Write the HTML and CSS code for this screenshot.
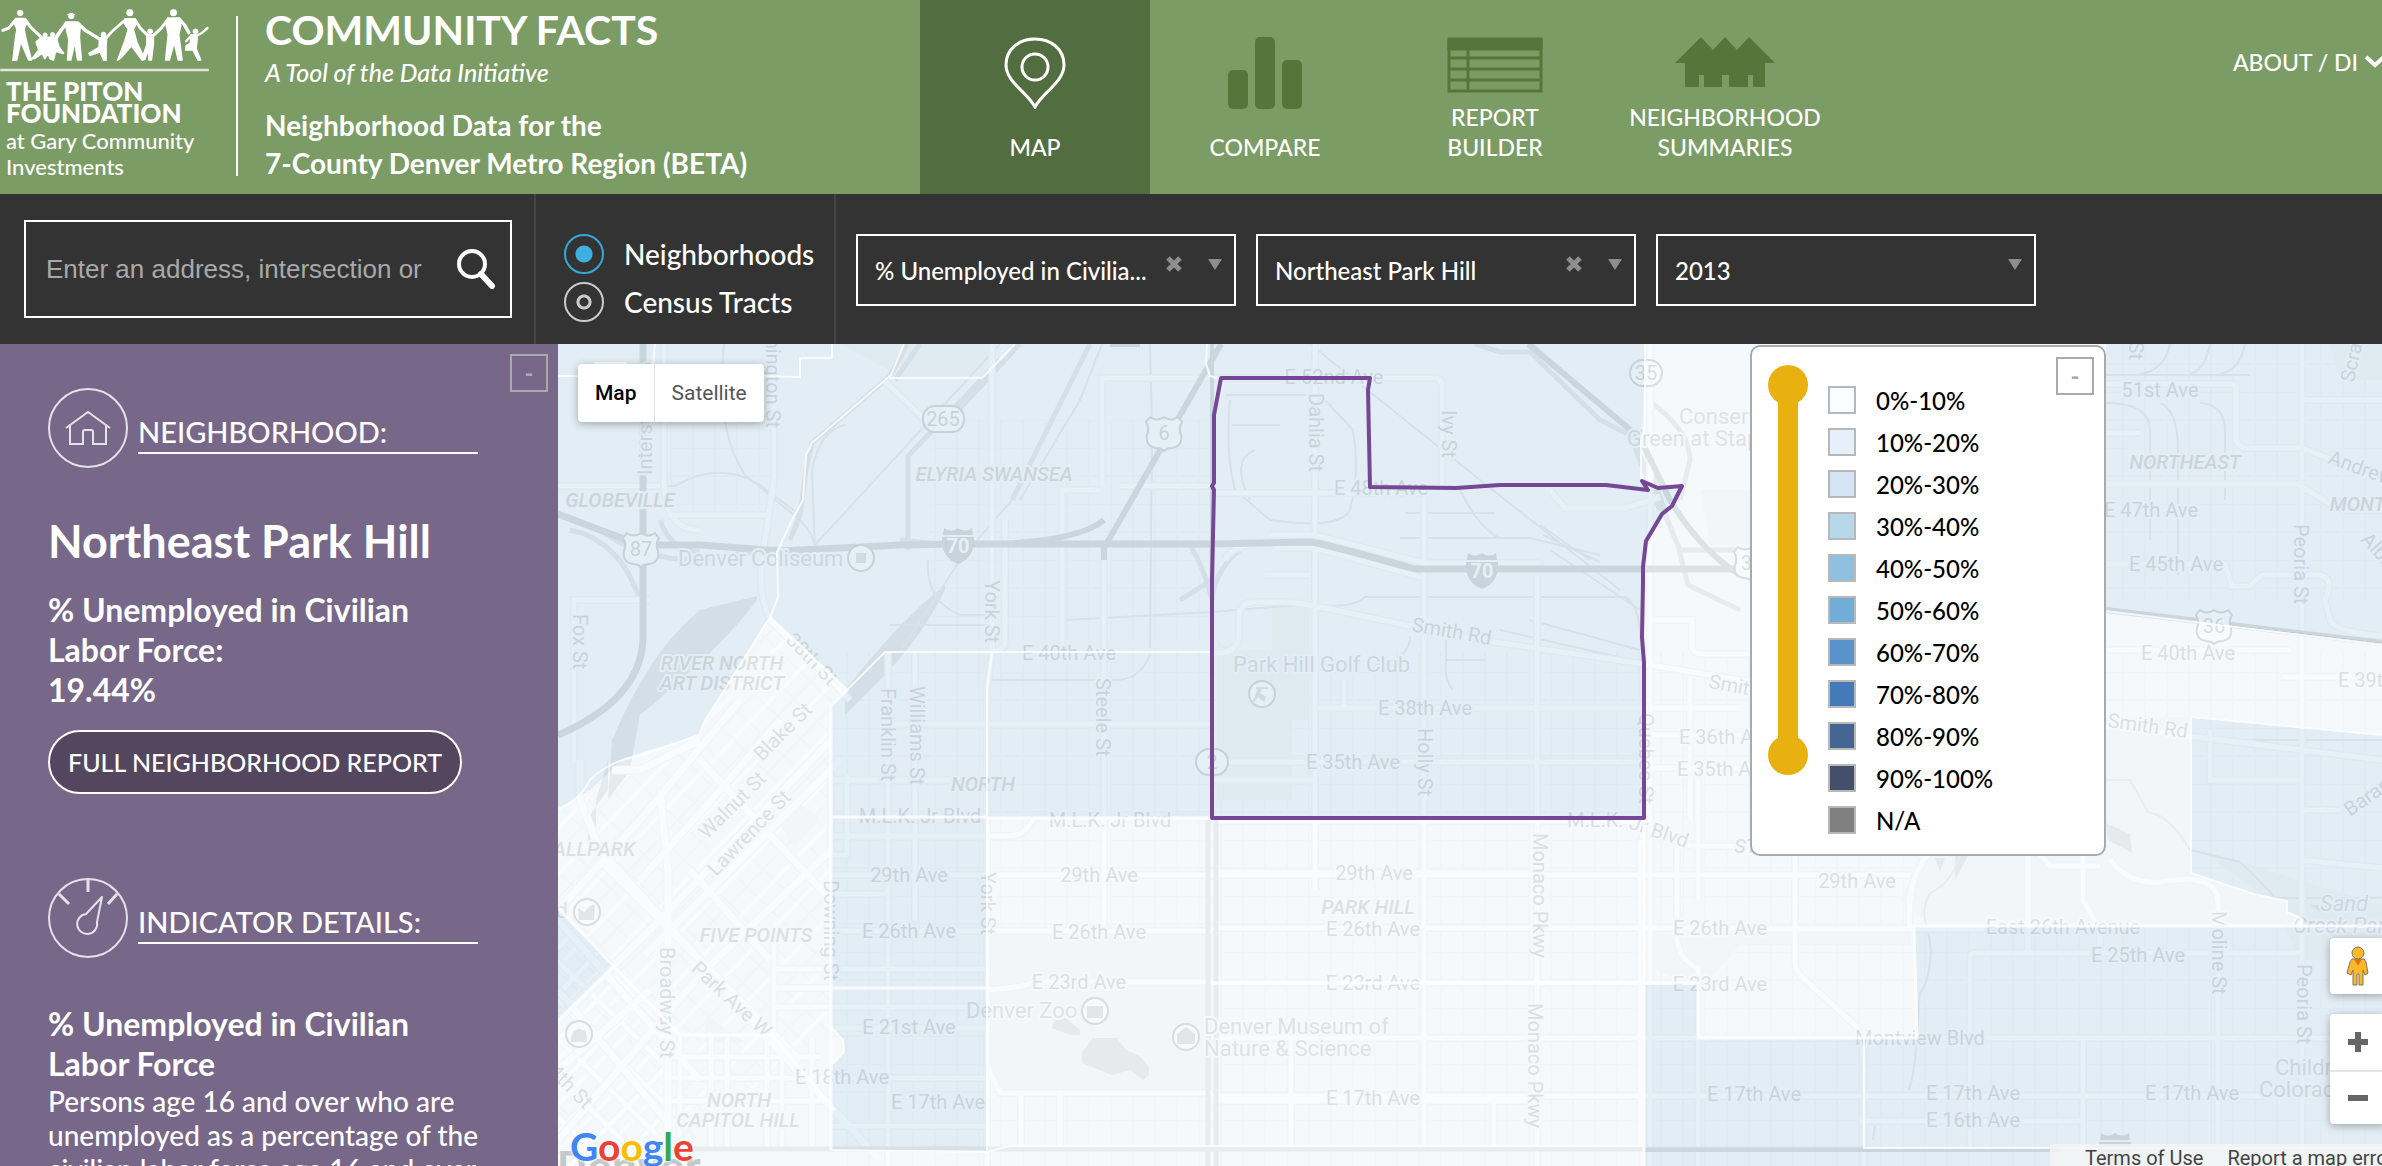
FILE: index.html
```html
<!DOCTYPE html>
<html lang="en">
<head>
<meta charset="utf-8">
<title>Community Facts</title>
<link rel="stylesheet" href="styles.css">
</head>
<body>
<header class="header">
  <div class="brand">
    <a class="logo" href="#">
      <svg class="people" viewBox="0 0 626 216" aria-hidden="true">
        <g fill="#fff" stroke="#fff" stroke-linecap="round" stroke-linejoin="round">
          <circle cx="60" cy="39" r="9"/>
          <path stroke-width="4" d="M46 55L75 55L80 68L72 88L78 118L94 180L85 180L62 125L50 180L38 181L46 112L50 88L42 70Z"/>
          <path fill="none" stroke-width="9" d="M46 60L26 84L8 91M76 60L92 82L124 112"/>
          <circle cx="135" cy="105" r="7"/><circle cx="157" cy="104" r="7"/>
          <path stroke-width="5" d="M124 112L168 112L176 140L190 160L166 154L160 180L150 176L144 160L134 176L126 160L104 175L96 176L116 150L108 126Z"/>
          <path fill="none" stroke-width="8" d="M166 112L188 82"/>
          <circle cx="213" cy="48" r="9"/><path stroke-width="4" d="M203 43L223 43"/>
          <path stroke-width="4" d="M196 66L232 66L240 84L238 112L244 180L232 180L224 128L212 180L202 180L206 118L198 88Z"/>
          <path fill="none" stroke-width="10" d="M198 70L182 92L166 118M234 70L254 90L296 116"/>
          <circle cx="310" cy="104" r="8"/>
          <path stroke-width="4" d="M298 114L320 112L318 140L318 181L310 181L300 156L270 166L266 160L296 142Z"/>
          <path fill="none" stroke-width="8" d="M318 114L338 92L372 62"/>
          <circle cx="389" cy="38" r="10"/>
          <path stroke-width="4" d="M374 56L405 56L408 72L400 88L410 126L434 178L426 181L394 138L362 174L352 181L374 122L384 88L372 70Z"/>
          <path fill="none" stroke-width="9" d="M405 60L420 84L440 104"/>
          <circle cx="450" cy="94" r="8"/>
          <path stroke-width="4" d="M440 104L460 104L460 132L454 180L446 180L444 150L434 178L426 174L440 134Z"/>
          <path fill="none" stroke-width="9" d="M460 106L482 86L502 60"/>
          <circle cx="520" cy="38" r="10"/>
          <path stroke-width="4" d="M502 54L538 54L542 76L536 104L546 180L534 180L522 128L508 180L496 180L504 104L498 76Z"/>
          <path fill="none" stroke-width="10" d="M538 58L554 76L566 98"/>
          <circle cx="586" cy="94" r="8"/>
          <path stroke-width="4" d="M572 104L592 104L590 130L588 146L602 180L594 181L578 150L556 150L558 136L570 130Z"/>
          <path fill="none" stroke-width="7" d="M592 106L606 98L622 84M572 108L558 124"/>
        </g>
        <path d="M0 210H626" stroke="#dfe8d8" stroke-width="7"/>
      </svg>
      <span class="logo-name">THE PITON<br>FOUNDATION</span>
      <span class="logo-sub">at Gary Community<br>Investments</span>
    </a>
    <div class="titles">
      <h1>COMMUNITY FACTS</h1>
      <p class="tagline">A Tool of the Data Initiative</p>
      <p class="region">Neighborhood Data for the<br>7-County Denver Metro Region (BETA)</p>
    </div>
  </div>
  <nav class="nav">
    <a class="nav-item active" href="#">
      <svg width="62" height="72" viewBox="0 0 62 72" fill="none" stroke="#fff" stroke-width="3"><path d="M31 70C24 56 2 45 2 28C2 12 15 2 31 2S60 12 60 28C60 45 38 56 31 70Z"/><circle cx="31" cy="30" r="13"/></svg>
      <span>MAP</span>
    </a>
    <a class="nav-item" href="#">
      <svg width="74" height="72" viewBox="0 0 74 72" fill="#54763b"><rect y="33" width="20" height="39" rx="5"/><rect x="27" width="20" height="72" rx="5"/><rect x="54" y="23" width="20" height="49" rx="5"/></svg>
      <span>COMPARE</span>
    </a>
    <a class="nav-item" href="#">
      <svg width="96" height="56" viewBox="0 0 96 56" fill="none" stroke="#54763b" stroke-width="3"><path fill="#54763b" d="M2 2H94V12H2Z"/><path d="M2 2V54H94V2M2 21H94M2 32H94M2 43H94M21 12V54"/></svg>
      <span>REPORT<br>BUILDER</span>
    </a>
    <a class="nav-item" href="#">
      <svg width="100" height="50" viewBox="0 0 100 50" fill="#54763b"><path d="M0 26L26 0L38 13L50 0L62 13L74 0L100 26H90V50H78V38H73V50H54V38H47V50H29V38H24V50H10V26Z"/></svg>
      <span>NEIGHBORHOOD<br>SUMMARIES</span>
    </a>
  </nav>
  <a class="about" href="#">ABOUT / DI
    <svg width="22" height="14" viewBox="0 0 22 14" fill="none" stroke="#fff" stroke-width="4"><path d="M2 2L11 10L20 2"/></svg>
  </a>
</header>

<form class="toolbar">
  <div class="search-cell">
    <div class="search">
      <input type="text" aria-label="Address search" placeholder="Enter an address, intersection or">
      <button type="button" aria-label="Search">
        <svg width="40" height="40" viewBox="0 0 40 40" fill="none" stroke="#fff" stroke-linecap="round"><circle cx="16" cy="15" r="13" stroke-width="4"/><path d="M25 25L36 37" stroke-width="6"/></svg>
      </button>
    </div>
  </div>
  <div class="levels">
    <label><input type="radio" name="level" checked>Neighborhoods</label>
    <label><input type="radio" name="level">Census Tracts</label>
  </div>
  <div class="filters">
    <div class="filter">
      <select aria-label="Indicator"><option>% Unemployed in Civilia...</option></select>
      <button class="clear" type="button" aria-label="Clear indicator"><svg width="16" height="16" viewBox="0 0 16 16" stroke="#8d8d8d" stroke-width="5"><path d="M2 2L14 14M14 2L2 14"/></svg></button>
      <span class="arrow"></span>
    </div>
    <div class="filter">
      <select aria-label="Neighborhood"><option>Northeast Park Hill</option></select>
      <button class="clear" type="button" aria-label="Clear neighborhood"><svg width="16" height="16" viewBox="0 0 16 16" stroke="#8d8d8d" stroke-width="5"><path d="M2 2L14 14M14 2L2 14"/></svg></button>
      <span class="arrow"></span>
    </div>
    <div class="filter">
      <select aria-label="Year"><option>2013</option></select>
      <span class="arrow"></span>
    </div>
  </div>
</form>

<main class="main">
  <aside class="sidebar">
    <button class="collapse" type="button">-</button>
    <section class="block">
      <div class="block-head">
        <svg width="80" height="80" viewBox="0 0 80 80" fill="none" stroke="#e6e2ea" stroke-width="2"><circle cx="40" cy="40" r="39"/><path d="M18 40L40 24L62 40M22 38V56H35V44Q35 42 37 42H43Q45 42 45 44V56H58V38"/></svg>
        <h2>NEIGHBORHOOD:</h2>
      </div>
      <h3 class="place">Northeast Park Hill</h3>
      <p class="stat">% Unemployed in Civilian<br>Labor Force:<br>19.44%</p>
      <button class="report" type="button">FULL NEIGHBORHOOD REPORT</button>
    </section>
    <section class="block">
      <div class="block-head">
        <svg width="80" height="80" viewBox="0 0 80 80" fill="none" stroke="#e6e2ea" stroke-width="2"><circle cx="40" cy="40" r="39"/><path stroke-width="3" d="M40 1V14M11 16L21 26M69 16L60 26"/><path d="M54 19L49 44A10 10 0 1 1 38 36Z" stroke-linejoin="round"/></svg>
        <h2>INDICATOR DETAILS:</h2>
      </div>
      <p class="stat detail">% Unemployed in Civilian<br>Labor Force</p>
      <p class="about-text">Persons age 16 and over who are<br>unemployed as a percentage of the<br>civilian labor force age 16 and over</p>
    </section>
  </aside>

  <section class="map" aria-label="Map">
    <svg class="map-canvas" viewBox="558 344 1824 822" preserveAspectRatio="xMinYMin slice">
      <defs>
        <pattern id="blocks" width="88" height="56" patternUnits="userSpaceOnUse"><path d="M0 28H88M0 0H88M11 0V56M33 0V56M55 0V56M77 0V56" stroke="#dfe3e7" stroke-width="2" fill="none"/></pattern>
        <pattern id="diag" width="24" height="32" patternUnits="userSpaceOnUse" patternTransform="rotate(-46)"><path d="M0 1H24M1 0V32" stroke="#dfe3e7" stroke-width="2" fill="none"/><path d="M0 17H24" stroke="#f8fafb" stroke-width="3"/></pattern>
        <pattern id="diag2" width="28" height="32" patternUnits="userSpaceOnUse" patternTransform="rotate(-46)"><path d="M0 4H28M4 0V32" stroke="#d8dce0" stroke-width="7" fill="none"/><path d="M0 4H28M4 0V32" stroke="#fcfdfe" stroke-width="5"/></pattern>
        <g id="us"><path d="M-14-16Q-7-11 0-16Q7-11 14-16L18-11Q14-5 17 2Q19 13 8 15Q3 15 0 18Q-3 15-8 15Q-19 13-17 2Q-14-5-18-11Z" fill="#f4f5f6" stroke="#75797d" stroke-width="2"/></g>
        <g id="inter" fill="#7d8287"><path d="M-14-18Q-7-13 0-18Q7-13 14-18L15-11H-15Z"/><path d="M-16-9H16Q17 12 0 18Q-17 12-16-9Z"/></g>
        <path id="roads" d="M558 486H660M574 762V600H650M664 344V480Q664 530 700 530M668 515H770M774 344V480L762 560Q758 600 772 622L850 700M884 380L925 420M1102 486V378H1212M1062 640V490H1100M992 344V652L987 690V1166M1005 520V640Q1005 652 990 652M1104 540V930M1062 492V652M1120 486H1212M1212 493H1424M1265 575H1310M888 652V1166M915 652V920M885 724H1212M831 780H987M831 836H1010Q1025 836 1034 818H1212M831 875H1740M831 931H1212M831 774V855H847V775M774 969H987M774 1007H987M774 988H831M774 930V1040M831 894H888V875M987 990Q1020 988 1035 982H1212M831 1028H987M670 1057H820M670 1078H987M670 1101H831M831 1126H987M680 1037V1150M711 1037V1150M727 1037V1150M767 1037V1150M782 1037V1150M812 1037V1150M987 1066L1000 1093H1212M1104 800V875M1021 1093V1150M1060 1093V1150M1315 344V818H1315V890M1100 378H1435Q1442 378 1442 386V487M1315 542H1270Q1230 545 1225 560M1275 548H1315L1424 578M1270 535H1315L1424 563H1540M1424 497V1148M1537 575V1166M1550 490L1565 508H1625L1660 497M1212 653H1222Q1238 650 1239 635V615Q1241 602 1254 602H1290L1315 606L1410 626L1480 640L1644 664L1740 680L2107 726L2382 760M1315 708H1344V680M1315 708H1740M1212 762H1644M1212 780H1315M1650 344V1166M1212 821H1620Q1660 822 1690 846H1760M1644 768H1740M1644 735H1740M1652 620H1692V640Q1690 655 1702 654H1750M1690 678V820M1646 842H1640V1148M1677 842V940Q1680 960 1698 968V1166M1698 780V900M1212 872L1315 873H1530M1212 928H1740M1212 983H1644M1212 1038H2382M1291 1038V1148M1212 1096H2330M1212 1101H1537M1494 1096V1148M1795 850V960Q1795 972 1805 980L1855 1025Q1862 1034 1864 1060V1166M1670 875H1910M1910 930Q1905 880 1930 852M1740 929H1990M1970 1148V960Q1970 953 1976 953H2302M2028 850V953M2083 850V900L2100 930V953M2100 866H2050L2036 850M2110 860Q2130 885 2160 882Q2215 872 2218 900V1148M2083 1038V1160M1860 1121H2083M2302 344V1166M2106 484H2298L2340 510H2382M2236 384H2106M2236 384V440Q2240 450 2250 448H2302L2382 480M2302 400H2382M2106 564H2225L2232 586H2250L2262 575H2320Q2335 578 2325 600L2330 620Q2335 632 2382 636M2106 650H2290M2282 677H2382M2210 730V780H2302M2302 810H2340M2302 860L2382 868M2106 433H2140"/>
        <path id="diagroads" d="M558 910L640 820L740 700M580 760V800L600 850L700 960L760 1030L880 1160M612 770H640L700 740M660 790L668 870V1166M600 860L800 1060M558 920L700 1080M558 990L666 1120M645 955L840 760M640 880L720 790L780 720M700 760L831 900M690 870L770 960M558 1020L660 920L831 740M558 1140L700 975L831 850M558 1070L650 990"/>
      </defs>
      <rect x="558" y="344" width="1824" height="822" fill="#ebeff3"/>
      <rect x="831" y="652" width="1551" height="514" fill="url(#blocks)"/>
      <path d="M664 378H770V520H664ZM930 420H1210V640H930ZM2106 344H2382V600H2106Z" fill="url(#blocks)"/>
      <path d="M770 617L847 690L831 706V1030L670 1160H558V809L699 735Z" fill="url(#diag)"/>
      <path d="M558 910L666 1030V1166H558Z" fill="url(#diag2)"/>
      <g fill="#dde0e2">
        <path d="M987 933H1212V1092H1000L987 1066ZM1217 640L1230 650H1272V606H1310V720H1292V800H1217ZM1646 930H1740L1910 932V945H1740L1700 990L1646 965ZM2106 717H2191V873L2280 900L2290 925H1930L1900 900L1925 856H1970L2106 850ZM1700 490H1750V545H1710ZM840 344H990V376H900ZM2200 850L2382 905V960H2302L2270 900ZM2330 344H2382V380H2340ZM706 1015L745 1042H705ZM780 825L800 805L820 818L795 848Z"/>
      </g>
      <g fill="#acb1b5">
        <path d="M757 596L700 610Q650 650 612 740L608 800L630 770L640 715Q720 650 757 600ZM945 585Q900 620 845 690L845 715L880 680Q920 640 945 590ZM590 815L608 790V760L596 800V845H587ZM2106 823L2130 834L2132 853L2108 840ZM1935 858H1945L1940 872ZM1955 856H1968L1955 880ZM2310 905H2330L2320 912ZM1082 1052L1093 1038H1117L1126 1050L1140 1056L1149 1068V1075L1143 1080L1130 1070L1112 1075L1082 1063ZM1052 1028L1055 1018H1066L1080 1030V1035H1070Z"/>
      </g>
      <g fill="none" stroke="#b6bbbf" stroke-width="2">
        <path d="M724 344Q715 430 745 475L800 520Q815 535 815 550M560 486H675Q720 460 760 485L800 515M815 545L1000 344M815 550L812 470Q820 430 845 425M1066 620L1212 612L1310 604Q1350 610 1365 597H1625Q1640 605 1640 640M1310 344L1480 480L1620 590M1225 395H1310M1230 400Q1225 450 1235 490L1270 520Q1340 530 1350 510Q1360 470 1353 430L1325 400M1405 513H1495M1460 490Q1480 530 1500 538H1530L1600 555M1400 538H1530M1250 500Q1230 460 1255 450M1232 425H1280M1375 665Q1410 660 1410 636M1446 640V660H1485M1446 660Q1444 680 1453 690M928 560Q925 600 960 615H985M890 625H990M992 680H1110Q1140 682 1150 655M1150 344L1152 430Q1151 520 1150 648M1530 620L1640 650M1500 630L1640 662M1540 525L1590 560M1543 535L1600 562M1550 550L1640 610M2106 375H2250M2106 403Q2150 403 2150 430V540M2160 403Q2178 410 2178 450V575M2200 403Q2225 405 2225 430V500M2170 344Q2165 370 2140 374M2210 344Q2205 370 2190 374M2245 344Q2240 370 2220 374M1970 780H2130L2148 812Q2170 815 2190 850L2240 862Q2260 880 2275 898H2382M1960 856Q1950 885 1930 893Q1920 910 1928 930L1931 950Q1930 980 1920 993L1915 1060Q1912 1085 1908 1090M1875 1125L1873 1140M2230 740H2382M900 652L960 560L1012 500M1020 500L1080 400L1102 344"/>
      </g>
      <g fill="none" stroke="#aeb3b7" stroke-width="5">
        <path d="M907 344L890 376L812 443L806 470L800 515L790 540M1000 360L908 456V550M940 430L1020 344M1090 344L1012 500M920 344L895 380M1640 430Q1665 520 1678 545L1688 585L1740 610M1648 400Q1690 430 1690 460L1680 500M1530 344L1630 430L1646 470L1680 550H1740M1475 344L1500 352H1530L1600 420L1630 435L1660 510M900 540L950 545M600 530Q640 560 700 560L780 548M640 600Q620 540 570 530M660 520Q670 550 700 552M1180 600L1212 580V540M1190 545Q1205 570 1212 600Q1215 570 1240 550"/>
      </g>
      <use href="#roads" fill="none" stroke="#d9dde1" stroke-width="8"/>
      <use href="#diagroads" fill="none" stroke="#d9dde1" stroke-width="9"/>
      <use href="#roads" fill="none" stroke="#f8fafb" stroke-width="5"/>
      <use href="#diagroads" fill="none" stroke="#fafbfc" stroke-width="7"/>
      <g fill="none" stroke="#888d91">
        <path stroke-width="7" d="M558 514L640 545H700L780 551L900 545L960 544H1211L1312 542Q1340 548 1415 569H1740M643 344V640Q640 700 558 735"/>
        <path stroke-width="6" d="M1221 344L1104 548V560M1000 544Q1080 540 1104 520M1528 344L1640 438L1670 500Q1700 550 1740 575M2106 610L2382 643M1140 344L1110 344"/>
        <path stroke="#b4b6b8" stroke-width="5" d="M645 1149H1864M1208 820V1166M1216 820V1166"/>
        <path stroke-width="4" d="M1644 1150H2060M1212 344V660"/>
      </g>

      <g class="lbl">
        <g text-anchor="middle">
          <text x="1069" y="660">E 40th Ave</text><text x="920" y="823">M.L.K. Jr Blvd</text><text x="1110" y="827">M.L.K. Jr Blvd</text>
          <text x="909" y="882">29th Ave</text><text x="1099" y="882">29th Ave</text><text x="1374" y="880">29th Ave</text><text x="1857" y="888">29th Ave</text>
          <text x="909" y="938">E 26th Ave</text><text x="1099" y="939">E 26th Ave</text><text x="1373" y="936">E 26th Ave</text><text x="1720" y="935">E 26th Ave</text>
          <text x="1079" y="989">E 23rd Ave</text><text x="1373" y="990">E 23rd Ave</text><text x="1720" y="991">E 23rd Ave</text>
          <text x="909" y="1034">E 21st Ave</text><text x="842" y="1084">E 18th Ave</text><text x="938" y="1109">E 17th Ave</text><text x="1373" y="1105">E 17th Ave</text>
          <text x="1754" y="1101">E 17th Ave</text><text x="1973" y="1100">E 17th Ave</text><text x="2192" y="1100">E 17th Ave</text><text x="1973" y="1127">E 16th Ave</text>
          <text x="1334" y="384">E 52nd Ave</text><text x="1381" y="495">E 48th Ave</text><text x="1425" y="715">E 38th Ave</text><text x="1353" y="769">E 35th Ave</text>
          <text x="2063" y="934">East 26th Avenue</text><text x="2138" y="962">E 25th Ave</text><text x="1920" y="1045">Montview Blvd</text>
          <text x="2160" y="397">51st Ave</text><text x="2151" y="517">E 47th Ave</text><text x="2176" y="571">E 45th Ave</text><text x="2188" y="660">E 40th Ave</text>
        </g>
        <text x="1567" y="827">M.L.K.</text><text transform="translate(1628 828) rotate(19)">Jr Blvd</text>
        <text x="1679" y="744">E 36th Ave</text><text x="1677" y="776">E 35th Ave</text><text x="2338" y="687">E 39th Ave</text>
        <text transform="translate(1411 631) rotate(10)">Smith Rd</text><text transform="translate(1708 688) rotate(10)">Smith Rd</text><text transform="translate(2107 727) rotate(8)">Smith Rd</text>
        <text transform="translate(2327 463) rotate(20)">Andrews Dr</text><text transform="translate(2360 540) rotate(48)">Albrook Dr</text><text transform="translate(2350 817) rotate(-35)">Baranmor</text><text transform="translate(2354 383) rotate(-78)">Scranton</text>
        <text transform="translate(707 840) rotate(-45)">Walnut St</text><text transform="translate(716 877) rotate(-46)">Lawrence St</text><text transform="translate(762 762) rotate(-45)">Blake St</text>
        <text transform="translate(785 641) rotate(46)">38th St</text><text transform="translate(690 970) rotate(43)">Park Ave W</text><text transform="translate(584 1110) rotate(46)" text-anchor="end">14th St</text>
        <g>
          <text transform="translate(824 880) rotate(90)">Downing St</text><text transform="translate(981 872) rotate(90)">York St</text><text transform="translate(660 947) rotate(90)">Broadway St</text>
          <text transform="translate(881 688) rotate(90)">Franklin St</text><text transform="translate(910 686) rotate(90)">Williams St</text><text transform="translate(1096 678) rotate(90)">Steele St</text>
          <text transform="translate(985 580) rotate(90)">York St</text><text transform="translate(573 614) rotate(90)">Fox St</text><text transform="translate(766 428) rotate(90)" text-anchor="end">Washington St</text>
          <text transform="translate(652 475) rotate(-90)">Interstate 25</text><text transform="translate(1309 393) rotate(90)">Dahlia St</text><text transform="translate(1442 410) rotate(90)">Ivy St</text>
          <text transform="translate(1418 728) rotate(90)">Holly St</text><text transform="translate(1639 713) rotate(90)">Quebec St</text><text transform="translate(1533 833) rotate(90)">Monaco Pkwy</text><text transform="translate(1528 1003) rotate(90)">Monaco Pkwy</text>
          <text transform="translate(2212 911) rotate(90)">Moline St</text><text transform="translate(2297 964) rotate(90)">Peoria St</text><text transform="translate(2294 524) rotate(90)">Peoria St</text><text transform="translate(2129 360) rotate(90)" text-anchor="end">Lima St</text>
        </g>
      </g>
      <g class="lbl poi">
        <text x="678" y="566">Denver Coliseum</text><text x="966" y="1018">Denver Zoo</text><text x="1233" y="672">Park Hill Golf Club</text>
        <text x="1204" y="1034">Denver Museum of</text><text x="1204" y="1056">Nature &amp; Science</text><text x="1679" y="424">Conservatory</text><text x="1627" y="446">Green at Stapleton</text>
        <text x="2275" y="1075">Children's</text><text x="2259" y="1097">Colorado</text><text x="568" y="918" text-anchor="end">Field</text>
        <g font-style="italic"><text x="2320" y="911">Sand</text><text x="2293" y="933">Creek Park</text></g>
      </g>
      <g class="lbl area" text-anchor="middle">
        <text x="983" y="791">NORTH</text><text x="739" y="1107">NORTH</text><text x="738" y="1127">CAPITOL HILL</text><text x="756" y="942">FIVE POINTS</text><text x="588" y="856">BALLPARK</text>
        <text x="620" y="507">GLOBEVILLE</text><text x="994" y="481">ELYRIA SWANSEA</text><text x="722" y="670">RIVER NORTH</text><text x="722" y="690">ART DISTRICT</text>
        <text x="1368" y="914">PARK HILL</text><text x="1788" y="853">STAPLETON</text><text x="2185" y="469">NORTHEAST</text><text x="2386" y="511">MONTBELLO</text>
      </g>
      <g fill="#f4f5f6" stroke="#75797d" stroke-width="2">
        <rect x="923" y="406" width="41" height="26" rx="12"/><rect x="1630" y="360" width="32" height="26" rx="13"/><rect x="1196" y="749" width="32" height="26" rx="13"/>
        <circle cx="861" cy="558" r="13"/><circle cx="1262" cy="694" r="13"/><circle cx="1186" cy="1037" r="13"/><circle cx="1095" cy="1011" r="13"/><circle cx="587" cy="912" r="13"/><circle cx="579" cy="1034" r="13"/>
      </g>
      <g fill="#9a9ea2"><path d="M856 553H866V563H856ZM1256 687H1268V689H1262L1260 693L1266 697L1264 702L1258 697L1254 703H1252L1257 691ZM1177 1034L1186 1027L1195 1034V1044H1177ZM1087 1006H1103V1018H1087ZM578 908L584 912L590 906L595 904L594 920H579ZM571 1038L574 1030H577A3 3 0 0 1 582 1030H585L587 1038V1042H571Z"/></g>
      <use href="#us" x="641" y="549"/><use href="#us" x="1164" y="433"/><use href="#us" x="1752" y="563"/><use href="#us" x="2214" y="626"/>
      <use href="#inter" x="958" y="546"/><use href="#inter" x="1482" y="571"/><use href="#inter" x="2115" y="1151"/>
      <g class="num"><text x="943" y="426">265</text><text x="641" y="556">87</text><text x="1164" y="440">6</text><text x="1646" y="380">35</text><text x="1212" y="769">2</text><text x="2214" y="633">36</text><text x="1752" y="570">36</text></g>
      <g class="num inv"><text x="958" y="553">70</text><text x="1482" y="578">70</text></g>

      <path class="low" d="M1645 344H2106V611L2382 643V735L2191 717V873L2254 894L2287 901V912L2302 919V926H1914L1917 1038H1698V985H1644V1166H558V1020L615 964L558 908V809L590 790L623 758L699 735L705 720L718 700L770 617L847 690L831 706V1027L843 1040L844 1052L831 1066V1150H987V818H1644V583L1643 567L1646 541L1662 514L1682 486H1650L1642 480L1642 440Z"/>
      <path class="mid" d="M558 344H1645L1642 440V480L1650 486H1682L1662 514L1646 541L1643 567L1644 583V818H987V1150H831V1066L844 1052L843 1040L831 1027V706L847 690L770 617L718 700L705 720L699 735L623 758L590 790L558 809ZM558 908L615 964L558 1020ZM2106 344H2382V643L2106 611ZM2191 717L2382 735V926H2302V919L2287 912V901L2254 894L2192 873ZM1644 985H1698V1038H1917L1914 926H2382V1166H1644Z"/>
      <text class="city" x="557" y="1184">Denver</text>
      <g class="edges">
        <path d="M558 376H595V363H626L630 376H760L800 377V358H832V344M904 344L891 375L812 443L806 455L803 500L792 520L777 552L778 598L770 617M655 344L652 376M889 378H982L1015 344M847 690L885 652H1212M992 652L987 690V1150M1207 344L1206 364L1210 376L1216 378M1645 344V425L1641 440V481"/>
        <path stroke-width="3" d="M770 617L847 690L831 706V1150M831 817H987M987 818H1212M1644 818V1166M558 908L680 1035H772L835 1110M831 988H987M1212 983H1698V1038H1917L1914 926H2382"/>
        <path d="M558 809Q580 800 590 780Q610 760 640 756L699 735L705 720L718 700L770 617M831 1027L843 1040L844 1052L831 1066M831 1150L987 1152L1010 1146H1644M1864 1038V1148H2382M2191 873V717L2382 735M2191 873L2254 894L2287 901V912L2302 919V926M2106 611L2382 645M615 964L558 1020"/>
      </g>
      <path class="selected" d="M1221 378H1370L1368 390L1370 487L1456 488L1500 485H1606L1648 490L1642 481L1658 488L1682 486L1672 506L1662 514L1646 541L1643 567V583L1642 637L1644 663V818H1212V580L1214 490L1212 486L1214 483V415Z"/>
    </svg>

    <div class="map-type">
      <button type="button" class="on">Map</button><button type="button">Satellite</button>
    </div>

    <div class="legend">
      <div class="range">
        <input type="range" aria-label="Lowest value" min="0" max="100" value="0">
        <input type="range" aria-label="Highest value" min="0" max="100" value="100">
      </div>
      <ul>
        <li><i class="c0"></i>0%-10%</li>
        <li><i class="c1"></i>10%-20%</li>
        <li><i class="c2"></i>20%-30%</li>
        <li><i class="c3"></i>30%-40%</li>
        <li><i class="c4"></i>40%-50%</li>
        <li><i class="c5"></i>50%-60%</li>
        <li><i class="c6"></i>60%-70%</li>
        <li><i class="c7"></i>70%-80%</li>
        <li><i class="c8"></i>80%-90%</li>
        <li><i class="c9"></i>90%-100%</li>
        <li><i class="na"></i>N/A</li>
      </ul>
      <button class="collapse" type="button">-</button>
    </div>

    <div class="map-tools">
      <button class="pegman" type="button" aria-label="Street view">
        <svg width="24" height="40" viewBox="0 0 24 40" fill="#fbb829" stroke="#7d7560" stroke-width="1"><path d="M6 13H18L20 16L22 27L19 29L17 24V39H13V28H11V39H7V24L5 29L1 27L4 16Z"/><path d="M8 13H16L12 20Z" fill="#e0761c" stroke="none"/><circle cx="12" cy="7" r="6"/></svg>
      </button>
      <div class="zoom">
        <button type="button" aria-label="Zoom in"><svg width="22" height="22" viewBox="0 0 22 22"><path d="M1 11H21M11 1V21" stroke="#666" stroke-width="6"/></svg></button>
        <button type="button" aria-label="Zoom out"><svg width="22" height="22" viewBox="0 0 22 22"><path d="M1 11H21" stroke="#666" stroke-width="6"/></svg></button>
      </div>
    </div>

    <a class="google" href="#"><span class="b">G</span><span class="r">o</span><span class="y">o</span><span class="b">g</span><span class="g">l</span><span class="r">e</span></a>
    <div class="terms"><a href="#">Terms of Use</a><a href="#">Report a map error</a></div>
  </section>
</main>
</body>
</html>
```
FILE: styles.css
```css
* { box-sizing: border-box; }
body {
  margin: 0;
  height: 100vh;
  display: flex;
  flex-direction: column;
  overflow: hidden;
  font-family: Lato, "Open Sans", sans-serif;
  font-size: 24px;
  color: #fff;
}
h1, h2, h3, p, ul { margin: 0; padding: 0; }
a { color: inherit; text-decoration: none; }
button, input, select { font: inherit; color: inherit; margin: 0; }
button { padding: 0; border: 0; background: none; cursor: pointer; }
svg { display: block; flex: none; }

/* Header */
.header { display: flex; flex: none; height: 194px; background: #7b9c65; overflow: hidden; }
.brand { display: flex; flex: 0 0 920px; }
.logo { width: 238px; border-right: 2px solid #fff; margin: 16px 0 18px; }
.people { width: 209px; height: 72px; margin-top: -16px; }
.logo-name { display: block; margin: 8px 0 0 6px; font-weight: 900; font-size: 26px; line-height: 22px; }
.logo-sub { display: block; margin: 4px 0 0 6px; font-size: 22px; line-height: 26px; font-weight: 500; }
.titles { padding: 6px 0 0 27px; }
h1 { font-size: 41px; line-height: 48px; font-weight: 700; }
.tagline { font-size: 25px; line-height: 36px; font-style: italic; font-weight: 500; }
.region { margin-top: 16px; font-size: 28px; line-height: 38px; font-weight: 700; }
.nav { display: flex; font-size: 23px; }
.nav-item {
  width: 230px;
  padding: 37px 0 32px;
  display: flex;
  flex-direction: column;
  align-items: center;
  justify-content: space-between;
  text-align: center;
  line-height: 30px;
  font-weight: 500;
}
.nav-item.active { background: #526d3f; }
.about { display: flex; gap: 6px; align-items: center; height: 30px; margin: 47px -4px 0 auto; font-size: 23px; font-weight: 500; white-space: nowrap; }

/* Toolbar */
.toolbar { display: flex; flex: none; height: 150px; background: #333; }
.search-cell { width: 536px; padding: 26px 22px 26px 24px; border-right: 2px solid #444; }
.search { display: flex; align-items: center; height: 98px; border: 2px solid #fff; padding: 0 14px 0 20px; }
.search input {
  flex: 1;
  min-width: 0;
  border: 0;
  outline: 0;
  background: none;
  padding: 0;
  font-family: "Liberation Sans", sans-serif;
  font-size: 26px;
}
.search input::placeholder { color: #a9a9a9; opacity: 1; }
.levels { width: 300px; padding: 36px 0 0 28px; border-right: 2px solid #444; }
.levels label { display: flex; align-items: center; gap: 20px; height: 48px; font-size: 28px; font-weight: 500; }
.levels input {
  appearance: none;
  width: 40px;
  height: 40px;
  flex: none;
  border: 2px solid #ccc;
  border-radius: 50%;
  background: radial-gradient(circle, transparent 4px, #ccc 5px, #ccc 7px, transparent 8px);
}
.levels input:checked { border-color: #34a9da; background: radial-gradient(circle, #3db0e0 8px, transparent 9px); }
.filters { display: flex; gap: 20px; padding: 40px 0 0 20px; }
.filter { position: relative; width: 380px; height: 72px; }
.filter select {
  appearance: none;
  width: 100%;
  height: 100%;
  border: 2px solid #fff;
  border-radius: 0;
  background: #333;
  padding: 0 80px 0 17px;
  font-weight: 500;
}
.clear { position: absolute; right: 54px; top: 22px; }
.arrow { position: absolute; right: 14px; top: 25px; border: 7px solid transparent; border-top: 11px solid #8d8d8d; border-bottom: 0; pointer-events: none; }

/* Main area */
.main { display: flex; flex: 1; min-height: 0; }
.sidebar { position: relative; flex: 0 0 558px; padding: 44px 80px 0 48px; background: #776788; overflow: hidden; }
.collapse { position: absolute; top: 10px; right: 10px; width: 38px; height: 38px; border: 2px solid #aaa; color: #aaa; line-height: 30px; font-weight: 700; }
.block { height: 490px; }
.block-head { display: flex; gap: 10px; }
.block-head h2 { flex: 1; height: 66px; padding-top: 26px; border-bottom: 2px solid #fff; font-size: 29px; line-height: 36px; font-weight: 500; }
.place { margin-top: 46px; font-size: 45px; line-height: 54px; font-weight: 700; }
.stat { margin-top: 22px; font-size: 32px; line-height: 40px; font-weight: 700; white-space: nowrap; }
.stat.detail { margin-top: 46px; }
.report { height: 64px; width: 414px; margin-top: 20px; border: 2px solid #fff; border-radius: 32px; background: #54465f; font-size: 25px; font-weight: 500; white-space: nowrap; }
.about-text { font-size: 28px; line-height: 34px; font-weight: 500; white-space: nowrap; }

/* Map */
.map { position: relative; flex: 1; min-width: 0; overflow: hidden; background: #f5f9fc; }
.map-canvas { width: 100%; height: 100%; font-family: Roboto, sans-serif; }
.lbl { font-size: 20px; fill: #7d8287; stroke: #eceef0; stroke-width: 4px; paint-order: stroke; stroke-linejoin: round; }
.poi { font-size: 22px; fill: #8a8f94; }
.area { font-style: italic; font-weight: 500; fill: #86867f; }
.city { font-size: 46px; font-weight: 500; fill: #c3c8c9; }
.num { font-size: 20px; fill: #777c81; text-anchor: middle; }
.num.inv { fill: #f4f5f6; font-weight: 700; }
.low { fill: #f8fcff; opacity: .76; }
.mid { fill: #e0ecf6; opacity: .76; }
.edges { fill: none; stroke: #fff; stroke-width: 2px; opacity: .8; }
.selected { fill: none; stroke: #754795; stroke-width: 4px; stroke-linejoin: round; }

.map-type { position: absolute; left: 20px; top: 20px; display: flex; height: 58px; background: #fff; border-radius: 4px; box-shadow: 0 2px 8px rgba(0, 0, 0, .3); font-family: Roboto, sans-serif; font-size: 21px; color: #565656; }
.map-type button { padding: 0 17px; }
.map-type .on { color: #000; font-weight: 500; border-right: 1px solid #e0e0e0; }

.legend { position: absolute; right: 276px; top: 1px; width: 356px; height: 511px; display: flex; gap: 20px; padding: 18px 16px; background: #fff; border: 2px solid #aaa; border-radius: 10px; color: #000; }
.range { position: relative; display: grid; width: 40px; height: 410px; flex: none; background: linear-gradient(#e8b10f, #e8b10f) center / 20px 380px no-repeat; }
.range input { grid-area: 1 / 1; appearance: none; writing-mode: vertical-lr; width: 40px; height: 410px; background: none; pointer-events: none; }
.range input::-webkit-slider-thumb { appearance: none; width: 40px; height: 40px; border-radius: 50%; background: #e8b10f; pointer-events: auto; }
.legend ul { list-style: none; padding-top: 14px; font-weight: 500; }
.legend li { display: flex; align-items: center; gap: 20px; height: 42px; }
.legend i { width: 28px; height: 28px; border: 2px solid #b8b8b8; }
.c0 { background: #f9fdff; }
.c1 { background: #e5f0fa; }
.c2 { background: #d5e4f3; }
.c3 { background: #b5d7e8; }
.c4 { background: #90c0df; }
.c5 { background: #70add7; }
.c6 { background: #5894cb; }
.c7 { background: #437ab7; }
.c8 { background: #456592; }
.c9 { background: #44506b; }
.na { background: #808080; }

.map-tools { position: absolute; right: -4px; bottom: 42px; display: grid; gap: 20px; }
.map-tools button { display: grid; place-items: center; width: 56px; height: 56px; }
.pegman, .zoom { background: #fff; border-radius: 4px; box-shadow: 0 2px 8px rgba(0, 0, 0, .3); }
.zoom button + button { border-top: 2px solid #e6e6e6; height: 54px; }

.google { position: absolute; left: 12px; bottom: -2px; font-size: 39px; line-height: 44px; font-weight: 700; text-shadow: 0 0 3px #fff, 0 0 3px #fff; }
.google .b { color: #4285f4; }
.google .r { color: #ea4335; }
.google .y { color: #fbbc05; }
.google .g { color: #34a853; }
.terms { position: absolute; right: 0; bottom: 0; width: 332px; height: 22px; display: flex; gap: 24px; padding-left: 35px; background: rgba(245, 245, 245, .8); overflow: hidden; font-family: Roboto, sans-serif; font-size: 20px; line-height: 28px; color: #444; white-space: nowrap; }
```
